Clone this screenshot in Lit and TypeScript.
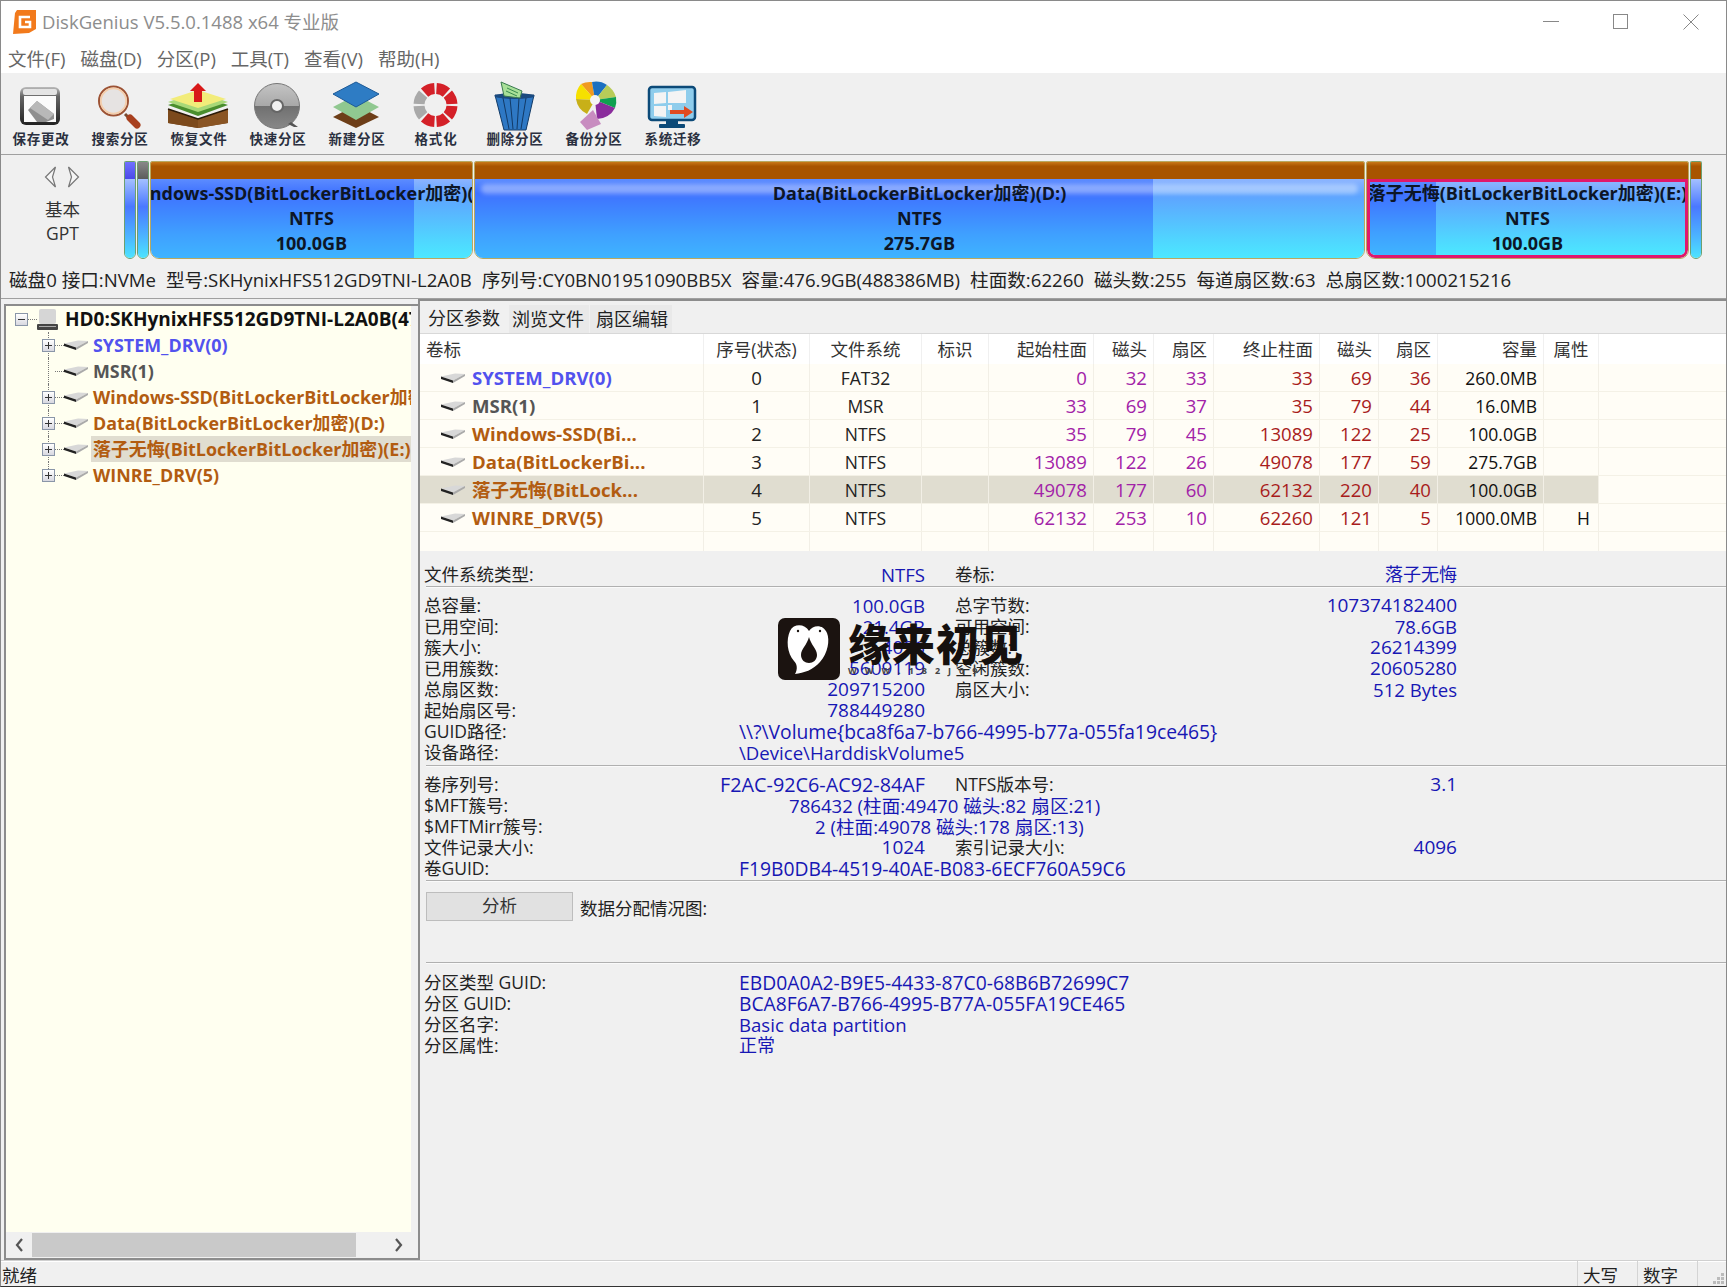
import { LitElement, html, css, svg } from "lit";
import { customElement } from "lit/decorators.js";

const ringSeg = (deg: number, col: string) => {
  const R = 22, r = 11, cx = 38.5, cy = 22, half = 19;
  const p = (a: number, q: number) => {
    const t = ((a - 90) * Math.PI) / 180;
    return `${(cx + q * Math.cos(t)).toFixed(2)} ${(cy + q * Math.sin(t)).toFixed(2)}`;
  };
  return svg`<path d="M${p(deg - half, R)}A${R} ${R} 0 0 1 ${p(deg + half, R)}L${p(deg + half, r)}A${r} ${r} 0 0 0 ${p(deg - half, r)}z" fill=${col}/>`;
};

const toolIcons = [
  svg`<defs><linearGradient id="sv" x1="0" y1="0" x2="0" y2="1"><stop offset="0" stop-color="#bbb"/><stop offset=".25" stop-color="#666"/><stop offset="1" stop-color="#222"/></linearGradient></defs>
  <rect x="18" y="4" width="40" height="38" rx="6" fill="url(#sv)"/><rect x="21" y="6" width="34" height="6" rx="2" fill="#e4e4e4"/>
  <rect x="22" y="13" width="32" height="26" fill="#fbfbfb"/><polygon points="26,27 35,18 52,31 52,36 44,39 35,39" fill="#8f8f8f"/><polygon points="35,18 52,31 46,37 28,25" fill="#b8b8b8"/>`,
  svg`<path d="M44 31l6 6" stroke="#7a4a30" stroke-width="3"/><path d="M49 35l7 7" stroke="#a8401e" stroke-width="7" stroke-linecap="round"/><circle cx="32.5" cy="18" r="14.5" fill="#e6e3e2" stroke="#9c5234" stroke-width="2"/><circle cx="32.5" cy="18" r="12.7" fill="none" stroke="#f4cdaa" stroke-width="1.8"/>`,
  svg`<polygon points="8,22 38,12 68,22 38,33" fill="#4a8e2e"/><polygon points="8,19 38,9 68,19 38,29" fill="#a8d878"/><polygon points="10,16 38,7 66,16 38,25" fill="#f2ec7a"/>
  <polygon points="8,26 38,36 68,26 68,40 38,45 8,40" fill="#6d3e14"/><polygon points="38,36 68,26 68,40 38,45" fill="#8a5524"/><polygon points="8,26 38,36 38,45 8,40" fill="#7c4a1c"/><path d="M8 26l30 10 30-10" stroke="#2a1a08" stroke-width="1.5" fill="none"/>
  <polygon points="38,0 46,8 42,8 42,19 34,19 34,8 30,8" fill="#d81818"/>`,
  svg`<defs><linearGradient id="cd" x1="0" y1="0" x2="0" y2="1"><stop offset="0" stop-color="#c4c4c4"/><stop offset=".5" stop-color="#a8a8a8"/><stop offset=".5" stop-color="#707070"/><stop offset="1" stop-color="#888"/></linearGradient></defs>
  <circle cx="38" cy="23" r="22.5" fill="url(#cd)" stroke="#777"/><circle cx="38" cy="23" r="6" fill="#f0f0f0" stroke="#666" stroke-width="2"/><path d="M52 39l7 5h-4l-6-3z" fill="#555"/>`,
  svg`<polygon points="15,34 38,22 61,34 38,45" fill="#6d3e18"/>
  <polygon points="15,24 38,12 61,24 38,37" fill="#90c890"/>
  <polygon points="15,11 38,-1 61,11 38,24" fill="#2e7cc4" stroke="#1c5a98"/>`,
  svg`${[22.5, 67.5, 112.5, 157.5, 202.5, 337.5].map((a) => ringSeg(a, "#d42028"))}${[247.5, 292.5].map((a) => ringSeg(a, "#a9a9a9"))}`,
  svg`<polygon points="19,12 58,12 50,47 28,47" fill="#2e78c4" stroke="#123a66"/><ellipse cx="38.5" cy="13" rx="20" ry="3" fill="#1a4a80"/><path d="M27 15l6 31M34 15l3 31M43 15l-2 31M50 15l-5 31" stroke="#123a66" fill="none"/>
  <polygon points="25,-1 46,8 44,15 28,13" fill="#a8e098" stroke="#3a7a50"/><path d="M31 5l11 5M30 8l11 5" stroke="#3a8a50"/>`,
  svg`<g transform="translate(40 17)"><path d="M0 0L-14 -16A20 20 0 0 1 -3 -18z" fill="#f09a20"/><path d="M0 0L-3 -18A20 20 0 0 1 12 -15z" fill="#1c70c0"/><path d="M0 0L12 -15A22 22 0 0 1 21 -3z" fill="#b8cc58"/><path d="M0 0L21 -3A22 22 0 0 1 20 8z" fill="#10a050"/><path d="M0 0L20 8A20 20 0 0 1 2 19z" fill="#8a2c9c"/><path d="M0 0L-19 -1A20 20 0 0 1 -14 -16z" fill="#f6e000"/><path d="M0 0L-19 -1A20 20 0 0 0 -8 14z" fill="#c8b018"/><polygon points="-2,10 6,24 -8,30 -15,22" fill="#c88cc0"/><circle r="5" fill="#f4f4f4"/></g>`,
  svg`<rect x="15" y="4" width="46" height="33" rx="3" fill="#8fcdec" stroke="#0c4a78" stroke-width="2.5"/><polygon points="20,10 32,9 32,20 20,21" fill="#f4f4f4"/><polygon points="34,9 52,7 52,20 34,20" fill="#f4f4f4"/><polygon points="20,23 32,23 32,34 20,33" fill="#f4f4f4"/><polygon points="34,22 38,22 38,27 34,27" fill="#f4f4f4"/>
  <polygon points="36,27 50,27 50,23 59,29 50,35 50,31 36,31" fill="#e04a20"/><rect x="32" y="37" width="12" height="4" fill="#0c4a78"/><rect x="25" y="41" width="26" height="4" rx="1" fill="#0c4a78"/>`,
];
const tools = ["保存更改", "搜索分区", "恢复文件", "快速分区", "新建分区", "格式化", "删除分区", "备份分区", "系统迁移"];

const treeRows = [
  { t: "SYSTEM_DRV(0)", c: "blue", exp: true },
  { t: "MSR(1)", c: "gray", exp: false },
  { t: "Windows-SSD(BitLockerBitLocker加密)(C:)", c: "org", exp: true },
  { t: "Data(BitLockerBitLocker加密)(D:)", c: "org", exp: true },
  { t: "落子无悔(BitLockerBitLocker加密)(E:)", c: "org", exp: true, sel: true },
  { t: "WINRE_DRV(5)", c: "org", exp: true, last: true },
];
const head = ["卷标", "序号(状态)", "文件系统", "标识", "起始柱面", "磁头", "扇区", "终止柱面", "磁头", "扇区", "容量", "属性"];
const headCls = ["l", "c", "c", "c", "r", "r", "r", "r", "r", "r", "r", "c"];
const rows = [
  ["SYSTEM_DRV(0)", "blue", "0", "FAT32", "", "0", "32", "33", "33", "69", "36", "260.0MB", ""],
  ["MSR(1)", "gray", "1", "MSR", "", "33", "69", "37", "35", "79", "44", "16.0MB", ""],
  ["Windows-SSD(Bi...", "org", "2", "NTFS", "", "35", "79", "45", "13089", "122", "25", "100.0GB", ""],
  ["Data(BitLockerBi...", "org", "3", "NTFS", "", "13089", "122", "26", "49078", "177", "59", "275.7GB", ""],
  ["落子无悔(BitLock...", "org", "4", "NTFS", "", "49078", "177", "60", "62132", "220", "40", "100.0GB", ""],
  ["WINRE_DRV(5)", "org", "5", "NTFS", "", "62132", "253", "10", "62260", "121", "5", "1000.0MB", "H"],
];
const diskInfo = ["磁盘0 接口:NVMe", "型号:SKHynixHFS512GD9TNI-L2A0B", "序列号:CY0BN01951090BB5X", "容量:476.9GB(488386MB)", "柱面数:62260", "磁头数:255", "每道扇区数:63", "总扇区数:1000215216"];

const partIcon = svg`<svg class="pi" viewBox="0 0 24 10" width="24" height="10"><polygon points="0,3.5 14,.5 24,1 12,7.5" fill="#d8d8d8"/><polygon points="0,3.5 12,7.5 12,10 0,6" fill="#222"/><polygon points="12,7.5 24,1 24,3 12,10" fill="#aaa"/></svg>`;

@customElement("app-root")
export class AppRoot extends LitElement {
  static styles = css`
    :host { display: flex; flex-direction: column; position: relative; width: 1727px; height: 1287px; overflow: hidden; box-sizing: border-box; background: #f0f0f0; border: 1px solid #8a8a8a; border-bottom-color: #333; font-family: "Open Sans", "Noto Sans CJK SC", sans-serif; font-size: 17.5px; color: #222; }
    .title { height: 41px; flex: none; background: #fff; display: flex; align-items: center; color: #8d8d8d; font-size: 18.5px; }
    .title .logo { margin-left: 12px; margin-right: 6px; flex: none; }
    .title .txt { flex: 1; padding-bottom: 2px; }
    .wc { width: 70px; height: 41px; display: flex; align-items: center; justify-content: center; }
    .menu { height: 31px; flex: none; background: #fff; display: flex; align-items: center; padding-left: 7px; gap: 15px; color: #666; font-size: 18.5px; }
    .tools { height: 82px; flex: none; display: flex; padding-left: .5px; background: #f0f0f0; border-bottom: 1px solid #a0a0a0; box-sizing: border-box; }
    .tool { width: 79px; display: flex; flex-direction: column; align-items: center; padding-top: 10px; box-sizing: border-box; }
    .tool svg { display: block; overflow: visible; flex: none; }
    .tool span { font-size: 13.5px; letter-spacing: .8px; line-height: 18px; color: #2b3040; font-weight: 600; white-space: nowrap; }
    .disk { height: 104px; flex: none; display: flex; padding-top: 6px; box-sizing: border-box; }
    .dleft { width: 123px; flex: none; display: flex; flex-direction: column; align-items: center; line-height: 24px; color: #333; font-size: 17.5px; padding-top: 5px; box-sizing: border-box; }
    .arrows { display: flex; gap: 10px; height: 31px; margin-left: -2px; }
    .parts { display: flex; gap: 1px; height: 98px; }
    .part { display: flex; flex-direction: column; border: 1px solid #b8a860; border-radius: 2px 2px 9px 9px; overflow: hidden; box-sizing: border-box; flex: none; }
    .part.sm { border-color: #6ca070; width: 12px; }
    .bar { height: 17px; flex: none; background: linear-gradient(#c87818, #a85400 25%, #a85400); }
    .bar.b { background: linear-gradient(#7070ff, #4a4ae8); }
    .bar.g { background: linear-gradient(#888, #5c5c5c); }
    .pbody { flex: 1; position: relative; display: flex; overflow: hidden; }
    .used { background: linear-gradient(#5c8cff, #3f72ff 18%, #3fa0ff 70%, #3fb4ff); flex: none; }
    .free { background: linear-gradient(#8cb4ff, #5ea4ff 22%, #4fd8ff 80%, #4ce8ff); flex: 1; }
    .fs { background: linear-gradient(#a4c0ff, #4a78ff 35%, #4cb8ff 75%, #4ce4ff); flex: 1; }
    .shine { position: absolute; left: 6px; right: 6px; top: 5px; height: 10px; border-radius: 5px; background: rgba(255,255,255,.35); filter: blur(2px); }
    .ptext { position: absolute; left: 0; right: 0; top: 2px; display: flex; flex-direction: column; align-items: center; font-weight: 700; font-size: 18px; line-height: 25px; color: #0d1626; white-space: nowrap; }
    .part.selp .pbody { border: 3px solid #e0186c; border-radius: 0 0 8px 8px; box-sizing: border-box; }
    .part.selp .ptext { top: -1px; }
    .info { height: 40px; flex: none; display: flex; align-items: center; gap: 10px; padding-left: 8px; box-sizing: border-box; border-bottom: 1px solid #a0a0a0; font-size: 18.6px; color: #222; white-space: nowrap; }
    .main { flex: 1; display: flex; min-height: 0; }
    .left { width: 417px; flex: none; padding: 5px 0 0 3px; box-sizing: border-box; display: flex; }
    .treebox { flex: 1; display: flex; flex-direction: column; border: 2px solid #8c8c8c; border-right: 0; background: #f0f0f0; min-width: 0; }
    .tree { flex: 1; width: 405px; background: #fffff0; overflow: hidden; font-weight: 700; font-size: 17.9px; white-space: nowrap; box-sizing: border-box; }
    .troot { height: 26px; display: flex; align-items: center; padding-left: 9px; color: #111; position: relative; overflow: hidden; }
    .troot b { font-weight: 700; margin-left: 7px; font-size: 19px; }
    .box { width: 13px; height: 13px; flex: none; box-sizing: border-box; border: 1px solid #8a96a8; background: linear-gradient(#fff, #d8d8e0); position: relative; z-index: 1; }
    .box::before { content: ""; position: absolute; left: 2px; right: 2px; top: 5px; height: 1px; background: #333; }
    .box.plus::after { content: ""; position: absolute; top: 2px; bottom: 2px; left: 5px; width: 1px; background: #333; }
    .dots { width: 9px; height: 0; border-top: 1px dotted #777; flex: none; }
    .trow { height: 26px; display: flex; align-items: center; padding-left: 36px; position: relative; }
    .trow::before { content: ""; position: absolute; left: 42px; top: 0; bottom: 0; border-left: 1px dotted #777; }
    .trow.last::before { bottom: 50%; }
    .trow .sp { width: 13px; flex: none; }
    .pi { flex: none; display: block; }
    .trow .lab { margin-left: 3px; padding: 0 2px; height: 26px; line-height: 26px; flex: 1; min-width: 0; }
    .trow.sel .lab { background: #e0ddd0; }
    .blue { color: #5252ee; } .gray { color: #555; } .org { color: #b25c10; }
    .hs { height: 26px; flex: none; display: flex; align-items: center; background: #f0f0f0; margin-top: -1px; }
    .hs .arr { width: 26px; display: flex; justify-content: center; flex: none; }
    .thumb { width: 324px; height: 24px; background: #c9c9c9; flex: none; }
    .hs .mid { width: 29px; flex: none; }
    .right { flex: 1; display: flex; flex-direction: column; border-left: 2px solid #8c8c8c; border-top: 2px solid #8c8c8c; min-width: 0; position: relative; }
    .tabs { height: 32px; flex: none; display: flex; align-items: flex-end; font-size: 18px; }
    .tab { height: 28px; display: flex; align-items: center; background: #e9e9e9; box-sizing: border-box; padding-bottom: 2px; }
    .tab.t1 { height: 32px; background: #f0f0f0; padding: 0 9px 0 8px; }
    .tab.t2 { padding-left: 3px; padding-right: 5px; }
    .tab.t3 { margin-left: 1px; padding-left: 6px; padding-right: 4px; }
    .tbl { flex: none; background: #fffdf6; border-top: 1px solid #d8d8d8; }
    .tr { display: grid; grid-template-columns: 284px 106px 112px 67px 105px 60px 60px 106px 59px 59px 106px 55px; height: 28px; line-height: 29px; border-bottom: 1px solid #f4f1e6; box-sizing: border-box; }
    .tr.h { background: #fff; height: 30px; line-height: 31px; border-bottom: 0; }
    .tr.e { height: 19px; border-bottom: 0; }
    .tr > div { padding: 0 6px; border-right: 1px solid #f2efe6; box-sizing: border-box; white-space: nowrap; overflow: hidden; }
    .tr.h > div { border-right-color: #f0f0f0; color: #333; }
    .tr.s > div { background: #e0ddd0; }
    .l { text-align: left; } .c { text-align: center; } .r { text-align: right; }
    .tr > .n { font-size: 18.6px; line-height: 27px; }
    .tr > .namec { display: flex; align-items: center; padding-left: 21px; font-weight: 700; font-size: 18.6px; gap: 7px; line-height: 27px; }
    .p { color: #a222a8; } .d { color: #a81c1c; } .k { color: #111; }
    .tr > .hc { padding-right: 8px; }
    .detail { flex: 1; padding: 13px 0 0 4px; color: #222; line-height: 21px; }
    .ir { display: grid; grid-template-columns: 125px 376px 30px 140px 362px; height: 21px; white-space: nowrap; }
    .il { display: grid; grid-template-columns: 315px 1fr; height: 21px; white-space: nowrap; }
    .v { color: #1717b4; font-size: 19px; }
    .v.m { font-size: 18.6px; }
    .v.j { font-size: 18px; }
    .v.g { font-size: 19.3px; }
    .v.x { font-size: 19.8px; }
    .ir .v:nth-child(2), .ir .v:nth-child(5) { text-align: right; }
    .ind1 { padding-left: 50px; } .ind2 { padding-left: 76px; }
    hr { margin: 0 0 0 2px; border: 0; border-top: 1px solid #b0b0b0; border-bottom: 1px solid #fafafa; height: 0; }
    .g1 { margin-top: 1px; margin-bottom: 7px; } .g2 { margin-top: 2px; margin-bottom: 7px; } .g3 { margin-top: 1px; margin-bottom: 10px; } .g4 { margin-top: 41px; margin-bottom: 8px; }
    .an { display: flex; align-items: flex-start; margin-left: 2px; }
    .btn { width: 147px; height: 29px; background: #e1e1e1; border: 1px solid #bdbdbd; box-sizing: border-box; text-align: center; line-height: 25px; color: #333; }
    .an span { margin: 6px 0 0 7px; }
    .status { height: 26px; flex: none; display: flex; align-items: center; border-top: 1px solid #d0d0d0; box-shadow: inset 0 1px 0 #fff; padding-left: 1px; box-sizing: border-box; color: #222; }
    .status .st1 { flex: 1; padding-top: 2px; }
    .status .cell { height: 100%; width: 60px; border-left: 1px solid #d4d4d4; padding-left: 5px; box-sizing: border-box; line-height: 28px; }
    .grip { width: 29px; flex: none; height: 100%; border-left: 1px solid #d4d4d4; display: flex; align-items: flex-end; justify-content: flex-end; box-sizing: border-box; }
    .wm { position: absolute; left: 777px; top: 617px; display: flex; pointer-events: none; }
    .wm .lg { width: 62px; height: 62px; border-radius: 7px; background: #1b1310; display: flex; align-items: center; justify-content: center; flex: none; }
    .wm .tx { margin-left: 8px; position: relative; width: 180px; }
    .wm .big { font-size: 43px; font-weight: 900; color: #15100e; letter-spacing: 1px; line-height: 48px; white-space: nowrap; font-family: "Noto Sans CJK SC", sans-serif; }
    .wm .small { font-size: 9px; letter-spacing: 8px; color: #444; line-height: 10px; white-space: nowrap; font-weight: 700; }
  `;

  private part(cls: string, w: number, used: number, lines: string[], sel = false) {
    return html`<div class="part ${sel ? "selp" : ""}" style="width:${w}px">
      <div class="bar"></div>
      <div class="pbody"><div class="used" style="width:${used}px"></div><div class="free"></div>
        ${cls === "shine" ? html`<div class="shine"></div>` : ""}
        <div class="ptext">${lines.map((l) => html`<span>${l}</span>`)}</div></div>
    </div>`;
  }

  render() {
    return html`
    <div class="title">
      <svg class="logo" width="23" height="24" viewBox="0 0 23 24"><polygon points="4,0 23,0 23,19 16,23 0,24 2,3" fill="#f27a1c"/><path d="M17 7H7v10h10v-5h-5" fill="none" stroke="#fff" stroke-width="2.6"/></svg>
      <span class="txt">DiskGenius V5.5.0.1488 x64 专业版</span>
      <div class="wc"><svg width="16" height="2"><rect width="16" height="1" fill="#888"/></svg></div>
      <div class="wc"><svg width="16" height="16"><rect x=".5" y=".5" width="14" height="14" fill="none" stroke="#888"/></svg></div>
      <div class="wc"><svg width="16" height="16"><path d="M.5.5l15 15M15.5.5l-15 15" stroke="#888"/></svg></div>
    </div>
    <div class="menu">${["文件(F)", "磁盘(D)", "分区(P)", "工具(T)", "查看(V)", "帮助(H)"].map((m) => html`<span>${m}</span>`)}</div>
    <div class="tools">${tools.map((t, i) => html`<div class="tool"><svg width="79" height="47" viewBox="0 0 79 47">${toolIcons[i]}</svg><span>${t}</span></div>`)}</div>
    <div class="disk">
      <div class="dleft">
        <div class="arrows">
          <svg width="13" height="22" viewBox="0 0 12 22"><polygon points="11,1 1,11 11,21 8,11" fill="#f6f6f6" stroke="#777" stroke-width="1.2"/></svg>
          <svg width="13" height="22" viewBox="0 0 12 22"><polygon points="1,1 11,11 1,21 4,11" fill="#f6f6f6" stroke="#777" stroke-width="1.2"/></svg>
        </div>
        <span>基本</span><span>GPT</span>
      </div>
      <div class="parts">
        <div class="part sm"><div class="bar b"></div><div class="pbody"><div class="fs"></div></div></div>
        <div class="part sm"><div class="bar g"></div><div class="pbody"><div class="fs"></div></div></div>
        ${this.part("", 323, 263, ["Windows-SSD(BitLockerBitLocker加密)(C:)", "NTFS", "100.0GB"])}
        ${this.part("shine", 891, 678, ["Data(BitLockerBitLocker加密)(D:)", "NTFS", "275.7GB"])}
        ${this.part("", 323, 66, ["落子无悔(BitLockerBitLocker加密)(E:)", "NTFS", "100.0GB"], true)}
        <div class="part sm"><div class="bar"></div><div class="pbody"><div class="fs"></div></div></div>
      </div>
    </div>
    <div class="info">${diskInfo.map((d) => html`<span>${d}</span>`)}</div>
    <div class="main">
      <div class="left"><div class="treebox">
        <div class="tree">
          <div class="troot"><span class="box"></span><span class="dots"></span>
            <svg width="21" height="21" viewBox="0 0 21 21" style="flex:none"><rect x="2" y="0" width="17" height="15" rx="2" fill="#d6d6d6"/><rect x="0" y="15" width="21" height="6" rx="1" fill="#444"/><rect x="2" y="17" width="17" height="1" fill="#aaa"/></svg>
            <b>HD0:SKHynixHFS512GD9TNI-L2A0B(477GB)</b></div>
          ${treeRows.map((r) => html`<div class="trow ${r.sel ? "sel" : ""} ${r.last ? "last" : ""}">
            ${r.exp ? html`<span class="box plus"></span>` : html`<span class="sp"></span>`}<span class="dots"></span>${partIcon}
            <span class="lab"><span class=${r.c}>${r.t}</span></span></div>`)}
        </div>
        <div class="hs">
          <div class="arr"><svg width="9" height="14" viewBox="0 0 9 14"><path d="M7 1L2 7l5 6" fill="none" stroke="#555" stroke-width="2.2"/></svg></div>
          <div class="thumb"></div><div class="mid"></div>
          <div class="arr"><svg width="9" height="14" viewBox="0 0 9 14"><path d="M2 1l5 6-5 6" fill="none" stroke="#555" stroke-width="2.2"/></svg></div>
        </div>
      </div></div>
      <div class="right">
        <div class="tabs"><div class="tab t1">分区参数</div><div class="tab t2">浏览文件</div><div class="tab t3">扇区编辑</div></div>
        <div class="tbl">
          <div class="tr h">${head.map((h, i) => html`<div class=${headCls[i]}>${h}</div>`)}</div>
          ${rows.map((r, i) => html`<div class="tr ${i === 4 ? "s" : ""}">
            <div class="namec">${partIcon}<span class=${r[1]}>${r[0]}</span></div>
            <div class="c n">${r[2]}</div><div class="c">${r[3]}</div><div class="c">${r[4]}</div>
            <div class="r p n">${r[5]}</div><div class="r p n">${r[6]}</div><div class="r p n">${r[7]}</div>
            <div class="r d n">${r[8]}</div><div class="r d n">${r[9]}</div><div class="r d n">${r[10]}</div>
            <div class="r k">${r[11]}</div><div class="r k hc">${r[12]}</div></div>`)}
          <div class="tr e">${head.map(() => html`<div></div>`)}</div>
        </div>
        <div class="detail">
          <div class="ir"><span>文件系统类型:</span><span class="v m">NTFS</span><span></span><span>卷标:</span><span class="v j">落子无悔</span></div>
          <hr class="g1"/>
          <div class="ir"><span>总容量:</span><span class="v m">100.0GB</span><span></span><span>总字节数:</span><span class="v">107374182400</span></div>
          <div class="ir"><span>已用空间:</span><span class="v m">21.4GB</span><span></span><span>可用空间:</span><span class="v m">78.6GB</span></div>
          <div class="ir"><span>簇大小:</span><span class="v">4096</span><span></span><span>总簇数:</span><span class="v">26214399</span></div>
          <div class="ir"><span>已用簇数:</span><span class="v">5609119</span><span></span><span>空闲簇数:</span><span class="v">20605280</span></div>
          <div class="ir"><span>总扇区数:</span><span class="v">209715200</span><span></span><span>扇区大小:</span><span class="v m">512 Bytes</span></div>
          <div class="ir"><span>起始扇区号:</span><span class="v">788449280</span></div>
          <div class="il"><span>GUID路径:</span><span class="v g">\\\\?\\Volume{bca8f6a7-b766-4995-b77a-055fa19ce465}</span></div>
          <div class="il"><span>设备路径:</span><span class="v m">\\Device\\HarddiskVolume5</span></div>
          <hr class="g2"/>
          <div class="ir"><span>卷序列号:</span><span class="v x">F2AC-92C6-AC92-84AF</span><span></span><span>NTFS版本号:</span><span class="v">3.1</span></div>
          <div class="il"><span>$MFT簇号:</span><span class="v m ind1">786432 (柱面:49470 磁头:82 扇区:21)</span></div>
          <div class="il"><span>$MFTMirr簇号:</span><span class="v m ind2">2 (柱面:49078 磁头:178 扇区:13)</span></div>
          <div class="ir"><span>文件记录大小:</span><span class="v">1024</span><span></span><span>索引记录大小:</span><span class="v">4096</span></div>
          <div class="il"><span>卷GUID:</span><span class="v g">F19B0DB4-4519-40AE-B083-6ECF760A59C6</span></div>
          <hr class="g3"/>
          <div class="an"><div class="btn">分析</div><span>数据分配情况图:</span></div>
          <hr class="g4"/>
          <div class="il"><span>分区类型 GUID:</span><span class="v g">EBD0A0A2-B9E5-4433-87C0-68B6B72699C7</span></div>
          <div class="il"><span>分区 GUID:</span><span class="v g">BCA8F6A7-B766-4995-B77A-055FA19CE465</span></div>
          <div class="il"><span>分区名字:</span><span class="v m">Basic data partition</span></div>
          <div class="il"><span>分区属性:</span><span class="v j">正常</span></div>
        </div>
      </div>
    </div>
    <div class="status"><span class="st1">就绪</span><div class="cell">大写</div><div class="cell">数字</div>
      <div class="grip"><svg width="14" height="14" viewBox="0 0 14 14" fill="#bbb"><rect x="9" y="1" width="3" height="3"/><rect x="5" y="5" width="3" height="3"/><rect x="9" y="5" width="3" height="3"/><rect x="1" y="9" width="3" height="3"/><rect x="5" y="9" width="3" height="3"/><rect x="9" y="9" width="3" height="3"/></svg></div></div>
    <div class="wm">
      <div class="lg"><svg width="46" height="52" viewBox="0 0 46 52"><path d="M23 8C19 1 8 0 4 8c-4 9-3 22 4 30 3 3 4 8 1 13 9-1 18-4 25-12 8-9 10-22 7-29-4-9-14-8-18-2z" fill="#fff"/><path d="M23 14c-2 8-8 12-8 18 0 5 4 8 8 8s8-3 8-8c0-6-6-10-8-18z" fill="#1b1310"/><circle cx="12" cy="8" r="1.2" fill="#1b1310"/><circle cx="34" cy="8" r="1.2" fill="#1b1310"/></svg></div>
      <div class="tx"><div class="big">缘来初见</div><div class="small">WWW.182J09</div></div>
    </div>`;
  }
}
